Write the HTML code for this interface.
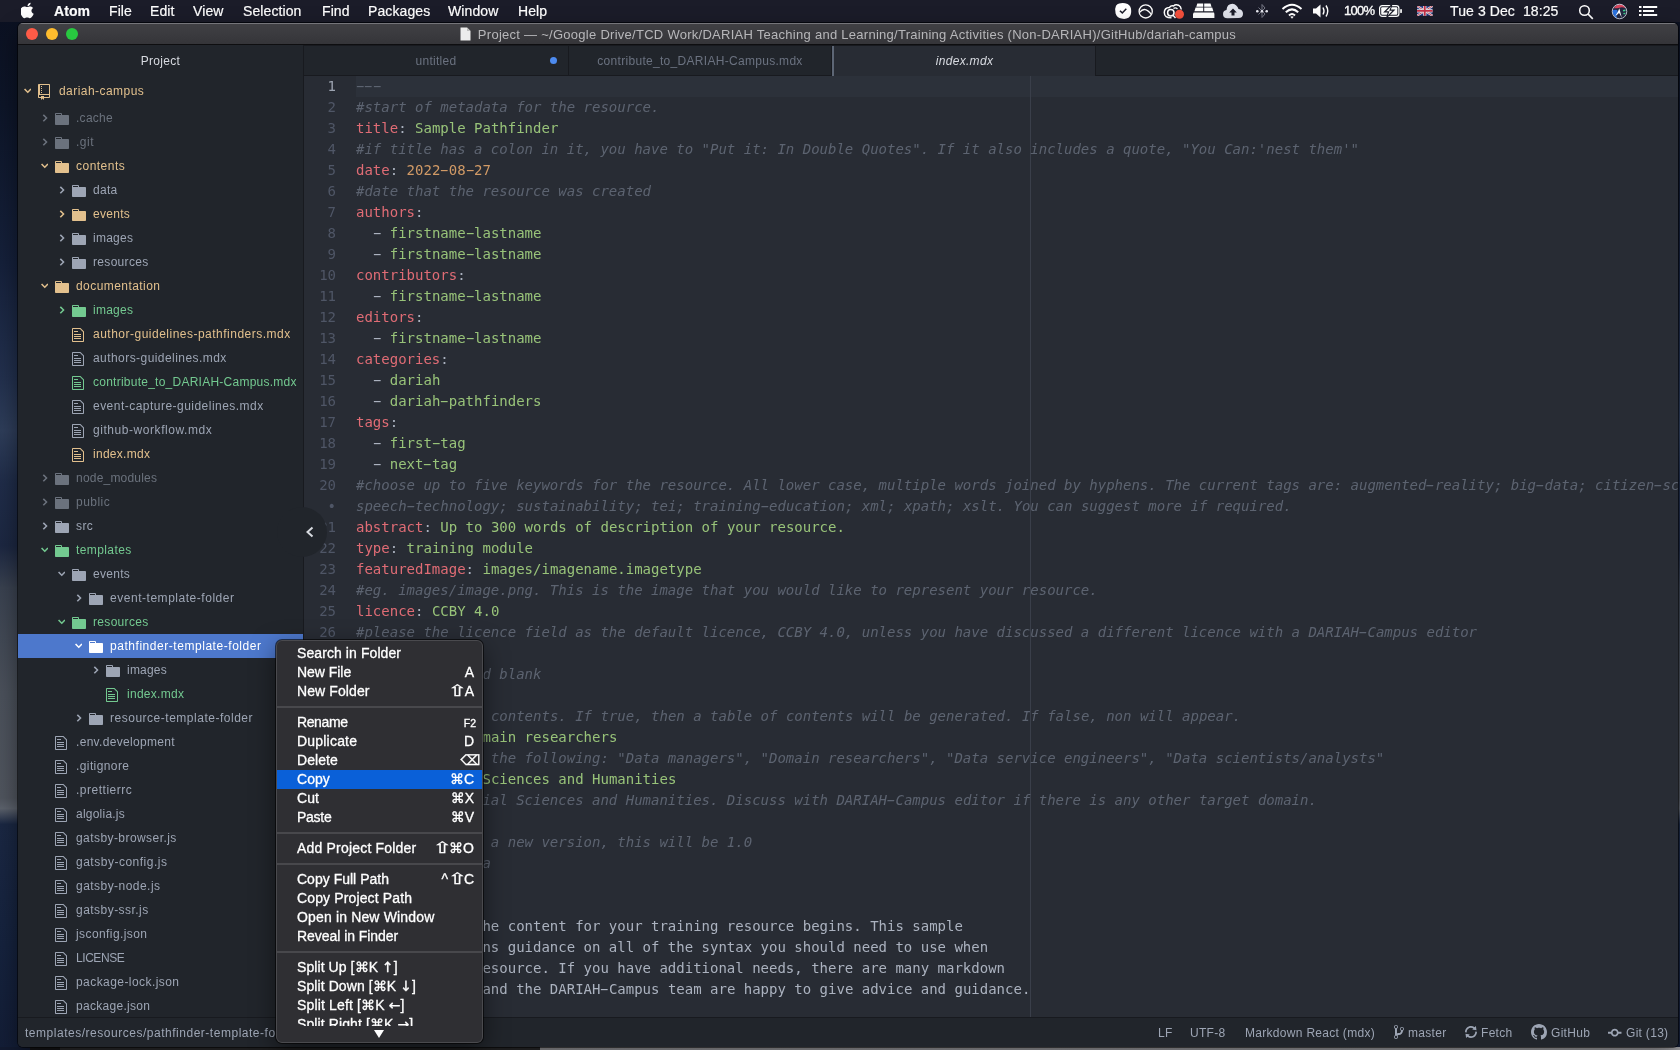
<!DOCTYPE html>
<html lang="en">
<head>
<meta charset="utf-8">
<title>Project — dariah-campus — Atom</title>
<style>
*{box-sizing:border-box;margin:0;padding:0}
html,body{width:1680px;height:1050px;overflow:hidden}
body{position:relative;background:#141a2b;font-family:"Liberation Sans",sans-serif;font-size:12px;color:#9da5b4;-webkit-font-smoothing:antialiased}
#desk{position:absolute;left:0;top:0;width:1680px;height:1050px;background:linear-gradient(180deg,#0b1020 0,#0d1528 10%,#15203a 25%,#22304d 36%,#2e3d59 41%,#1f2c48 46%,#1c2741 52%,#39414f 56%,#4a505a 66%,#4f545d 76%,#5b616b 77%,#1a2742 78.5%,#15223d 90%,#131d36 100%)}
#deskb{position:absolute;left:0;top:1047px;width:1680px;height:3px;background:linear-gradient(90deg,#121a30 0,#121a30 30px,#141416 30px,#141416 60px,#2a2a2c 60px,#2a2a2c 540px,#98989c 540px,#a4a4a8 100%)}
/* ---------- mac menu bar ---------- */
#mb{will-change:transform;position:absolute;left:0;top:0;width:1680px;height:22px;background:#1b1c29;color:#fff;font-size:14px;line-height:22px;white-space:nowrap}
#mb .it{position:absolute;top:0;height:22px;letter-spacing:0.1px;-webkit-text-stroke:0.2px #fff}
#mb .b{font-weight:bold}
#mb svg{position:absolute}
/* ---------- window ---------- */
#win{will-change:transform;position:absolute;left:18px;top:23px;width:1660px;height:1024px;border-radius:5px;overflow:hidden;background:#282c34;box-shadow:0 0 0 1px rgba(0,0,0,.55),0 8px 22px rgba(0,0,0,.45)}
#tb{position:absolute;left:0;top:0;width:1660px;height:22px;background:linear-gradient(180deg,#404044 0%,#353539 100%);border-top:1px solid #75757a;border-bottom:1px solid #0e0e10}
#tb .dot{position:absolute;top:4px;width:12px;height:12px;border-radius:50%}
#tb .ttl{position:absolute;left:0;top:0;width:1660px;text-align:center;font-size:13px;line-height:22px;color:#b7b7ba;white-space:nowrap;letter-spacing:0.27px}
/* ---------- tree ---------- */
#tree{position:absolute;left:0;top:22px;width:286px;height:972px;background:#21252b;border-right:1px solid #181a1f;overflow:hidden}
#tree .hd{position:absolute;left:0;top:1px;width:285px;height:30px;line-height:30px;text-align:center;color:#d7dae0;font-size:12px;letter-spacing:0.3px}
.row{position:absolute;left:0;width:285px;height:24px;line-height:24px;white-space:nowrap}
.row.root{height:24px}
.row.sel{background:#4d78cc}
.row span{position:absolute}
.row .cv{top:0;height:24px}
.row .cv svg{position:absolute}
.row .ic svg{display:block}
.row .nm{top:0;font-size:12px;letter-spacing:0.5px}
/* ---------- tabs ---------- */
#tabs{position:absolute;left:286px;top:22px;width:1374px;height:31px;background:#21252b;border-bottom:1px solid #181a1f;border-top:1px solid #181a1f}
.tab{position:absolute;top:0;width:264px;height:30px;line-height:31px;text-align:center;border-right:1px solid #181a1f;color:#6b7280;font-size:12px;letter-spacing:0.3px}
.tab.act{background:#282c34;color:#d7dae0;font-style:italic;height:30px;border-left:2px solid #5d6675}
.tab .mod{position:absolute;right:11px;top:11px;width:7px;height:7px;border-radius:50%;background:#4d8bf0}
/* ---------- editor ---------- */
#ed{position:absolute;left:286px;top:53px;width:1374px;height:941px;background:#282c34;overflow:hidden;font-family:"DejaVu Sans Mono","Liberation Mono",monospace;font-size:14px;line-height:21px}
#curline{position:absolute;left:52px;top:0;width:1322px;height:21px;background:#2c313a}
#gut{position:absolute;left:0;top:0;width:32px;text-align:right;color:#4f5666}
#gut div{height:21px}
#gut .cur{color:#9da4b1}
#code{position:absolute;left:52px;top:0}
#code div{height:21px;white-space:pre}
#wrap{position:absolute;left:726px;top:0;width:1px;height:943px;background:#3a3f4a}
.hy{display:inline-block;transform:scaleX(1.9)}
.r{color:#e06c75}.g{color:#98c379}.o{color:#d19a66}.p{color:#abb2bf}.c{color:#5c6370;font-style:italic}
#collapse{position:absolute;left:259px;top:484px;width:50px;height:50px;border-radius:50%;background:#21252b}
/* ---------- status ---------- */
#sb{position:absolute;left:0;top:994px;width:1660px;height:30px;background:#21252b;border-top:1px solid #181a1f;color:#9da5b4;font-size:12px;line-height:30px;white-space:nowrap}
#sb span{position:absolute;top:0;letter-spacing:0.3px}
#sb svg{position:absolute}
/* ---------- context menu ---------- */
#cm{will-change:transform;position:absolute;left:276px;top:640px;width:207px;height:403px;border-radius:6px;background:#2f2f33;box-shadow:0 0 0 1px rgba(0,0,0,.6),0 8px 24px rgba(0,0,0,.5);overflow:hidden;color:#fff;font-size:14px}
#cm .in{position:absolute;left:0;top:0;width:207px;height:403px;border:1px solid #4a4a4e;border-radius:6px}
#cm .list{position:absolute;left:0;top:4px;width:207px;height:382px;overflow:hidden}
.mi{position:relative;height:19px;line-height:19px;white-space:nowrap;-webkit-text-stroke:0.3px #fff}
.mi.hl{background:#0a60d8}
.mi .ml{position:absolute;left:21px;top:0;letter-spacing:0.1px}
.mi .mk{position:absolute;right:9px;top:0;font-family:"Liberation Sans","DejaVu Sans",sans-serif;font-size:14px}
.mi .mk.f2{font-size:10.5px;right:7px;top:0.5px}
.mi .mk.bs{right:3px;font-size:14px}
.mi .sh{display:inline-block;transform:scale(1.6,1.1);margin:0 1.5px 0 2.5px}
.mi .ar{font-family:"DejaVu Sans",sans-serif;font-size:14px;line-height:1}
.sep{height:12px;position:relative}
.sep:after{content:"";position:absolute;left:0;top:5px;width:207px;height:2px;background:#48484c}
#cm .arr{position:absolute;left:98px;top:390px;width:0;height:0;border-left:5.5px solid transparent;border-right:5.5px solid transparent;border-top:8px solid #fff}
</style>
</head>
<body>
<div id="desk"></div>
<div id="deskb"></div>

<div id="mb">
 <span class="it b" style="left:54px">Atom</span>
 <span class="it" style="left:109px">File</span>
 <span class="it" style="left:150px">Edit</span>
 <span class="it" style="left:193px">View</span>
 <span class="it" style="left:243px">Selection</span>
 <span class="it" style="left:322px">Find</span>
 <span class="it" style="left:368px">Packages</span>
 <span class="it" style="left:448px">Window</span>
 <span class="it" style="left:518px">Help</span>
 <svg style="left:21px;top:2px" width="14" height="17" viewBox="0 0 15 18"><path d="M10.3 0.6 C10.4 1.6 10 2.5 9.4 3.2 C8.8 3.9 7.9 4.4 7 4.3 C6.9 3.4 7.3 2.5 7.9 1.8 C8.5 1.1 9.5 0.7 10.3 0.6 Z M13.6 12.6 C13.2 13.6 12.9 14.1 12.4 14.9 C11.6 16 10.6 17.3 9.4 17.3 C8.3 17.3 8 16.6 6.6 16.6 C5.1 16.6 4.8 17.3 3.7 17.3 C2.5 17.3 1.6 16.1 0.9 15 C-1 12 -1.2 8.500 0 6.700 C0.900 5.400 2.200 4.600 3.500 4.600 C4.800 4.600 5.600 5.300 6.700 5.300 C7.700 5.300 8.400 4.600 9.900 4.600 C11 4.600 12.200 5.200 13.100 6.300 C10.300 7.800 10.700 11.700 13.600 12.600 Z" fill="#fff"/></svg>
 <svg style="left:1114px;top:2px" width="18" height="18" viewBox="0 0 18 18"><path d="M5.200 1.400 Q9.500 0.200 13.600 2 Q17.300 4.200 17.200 9 Q17.300 13.600 14.500 15.800 Q11.500 17.500 7.500 16.600 Q3 15.800 1.600 11.500 Q0.300 7 2 3.800 Q3.200 1.900 5.200 1.400 Z" fill="#fff"/><path d="M5.900 8.700 L8.300 10.900 L12.300 6.800" fill="none" stroke="#1b1c29" stroke-width="1.500"/></svg>
 <svg style="left:1137px;top:2px" width="18" height="18" viewBox="0 0 18 18"><circle cx="8.700" cy="9.400" r="6.600" fill="none" stroke="#fff" stroke-width="1.300"/><path d="M2.600 10.300 Q8 3.800 14.300 12.500" fill="none" stroke="#fff" stroke-width="1.300"/></svg>
 <svg style="left:1162px;top:2px" width="24" height="18" viewBox="0 0 24 18"><path d="M9.500 15.800 Q2.300 16 2.300 10.500 Q2.300 5.600 7.500 5.400 Q9 3.300 11.500 4 Q13.500 2 16.500 3.200 Q19 4.500 19.300 7.500" fill="none" stroke="#fff" stroke-width="1.500"/><circle cx="8.800" cy="10.700" r="3.200" fill="none" stroke="#fff" stroke-width="1.500"/><path d="M10.800 13 L13.500 16" stroke="#fff" stroke-width="1.500"/><path d="M11.500 6.500 Q13.500 5 15.500 7" fill="none" stroke="#fff" stroke-width="1.300"/><circle cx="17.500" cy="12.300" r="4.500" fill="#f4503c"/></svg>
 <svg style="left:1192px;top:2px" width="23" height="18" viewBox="0 0 23 18"><path d="M5.300 1.600 H11.200 V4.700 H4.300 Z M12.200 1.600 H18.500 L19.500 4.700 H12.200 Z M3.600 5.600 H11.200 V9.200 H2.400 Z M12.200 5.600 H20.200 L21.400 9.200 H12.200 Z M1.800 10.500 H22 L22.400 12 V15.900 H1 V12 Z" fill="#fff"/></svg>
 <svg style="left:1222px;top:3px" width="22" height="16" viewBox="0 0 22 16"><path d="M5.500 15.300 Q1 15.300 1 11 Q1 7.500 4.500 7 Q5 0.800 10.500 0.800 Q15 1.500 16.500 6 Q21 6.500 21 10.800 Q21 15 16.500 15 Z" fill="#dfe1ea"/><path d="M11 5.500 L14.800 9.500 H12.500 V12.500 H9.500 V9.500 H7.200 Z" fill="#1b1c29"/></svg>
 <svg style="left:1255px;top:2px" width="14" height="18" viewBox="0 0 14 18"><path d="M3.500 5.500 L10 12 L7 15.500 V2.500 L10 6 L3.500 12.500" fill="none" stroke="#777886" stroke-width="1"/><circle cx="2.300" cy="9.200" r="1.300" fill="#e8e9f0"/><circle cx="7" cy="9.200" r="1.300" fill="#e8e9f0"/><circle cx="11.700" cy="9.200" r="1.300" fill="#e8e9f0"/></svg>
 <svg style="left:1281px;top:3px" width="22" height="16" viewBox="0 0 22 16"><path d="M1.500 6 Q11 -2.500 20.500 6" fill="none" stroke="#fff" stroke-width="2"/><path d="M4.800 9.300 Q11 3.500 17.200 9.300" fill="none" stroke="#fff" stroke-width="2"/><path d="M8 12.400 Q11 9.600 14 12.400" fill="none" stroke="#fff" stroke-width="2"/><path d="M11 15.700 L9.300 13.800 Q11 12.600 12.700 13.800 Z" fill="#fff"/></svg>
 <svg style="left:1312px;top:3px" width="20" height="16" viewBox="0 0 20 16"><path d="M1 5.500 H4 L8.500 1.500 V14.500 L4 10.500 H1 Z" fill="#fff"/><path d="M11 4.500 Q13 8 11 11.500" fill="none" stroke="#fff" stroke-width="1.400"/><path d="M14 2.500 Q17.500 8 14 13.500" fill="none" stroke="#fff" stroke-width="1.400"/></svg>
 <span class="it" style="left:1344px;font-size:13px;letter-spacing:-0.7px;-webkit-text-stroke:0.35px #fff">100%</span>
 <svg style="left:1379px;top:5px" width="24" height="12" viewBox="0 0 24 12"><rect x="0.600" y="0.600" width="19.300" height="10.800" rx="2.600" fill="none" stroke="#fff" stroke-width="1.200"/><rect x="2.200" y="2.200" width="16.100" height="7.600" rx="1" fill="#fff"/><rect x="21.200" y="3.900" width="1.700" height="4.200" rx="0.850" fill="#fff"/><path d="M12.600 0 L5.800 6.900 H9.600 L8 12 L14.800 5.100 H11 Z" fill="#1b1c29" stroke="#1b1c29" stroke-width="1.400"/><path d="M12 1.400 L7.200 6.300 H10.400 L8.800 10.600 L13.400 5.700 H10.200 Z" fill="#fff"/></svg>
 <svg style="left:1417.300px;top:6.200px;opacity:0.9" width="15.500" height="9.700" viewBox="0 0 17 11" preserveAspectRatio="none"><rect width="17" height="11" fill="#2b3f8c"/><path d="M0 0 L17 11 M17 0 L0 11" stroke="#fff" stroke-width="2.400"/><path d="M0 0 L17 11 M17 0 L0 11" stroke="#d8324a" stroke-width="0.900"/><path d="M8.500 0 V11 M0 5.500 H17" stroke="#fff" stroke-width="3.600"/><path d="M8.500 0 V11 M0 5.500 H17" stroke="#d8324a" stroke-width="2"/></svg>
 <span class="it" style="left:1450px">Tue 3 Dec&nbsp; 18:25</span>
 <svg style="left:1578px;top:4px" width="16" height="16" viewBox="0 0 16 16"><circle cx="6.500" cy="6.500" r="4.800" fill="none" stroke="#fff" stroke-width="1.500"/><path d="M10 10 L14.800 14.800" stroke="#fff" stroke-width="1.700"/></svg>
 <svg style="left:1610.500px;top:2.500px" width="17" height="17" viewBox="0 0 18 18"><circle cx="9" cy="9" r="8" fill="#232842"/><path d="M3 5.500 Q6 1.200 9.500 1.300 Q13.500 1.600 15.500 5.500 Q12 3.800 9 5 Q6 5.800 3 5.500 Z" fill="#d6455c"/><path d="M1.300 8 Q3.500 6.500 6.500 7.500 L7.500 10 Q5 13.500 6.500 16.300 Q2 14.500 1.300 8 Z" fill="#2a72e0"/><path d="M8.800 5.500 L11.500 16 Q9.800 12 8.500 10.500 Q6.500 12.500 4.500 13.500 Q7.500 10 8.800 5.500 Z" fill="#ffffff"/><path d="M12.500 7.500 L15 7 L15.500 8.500 L13 9 Z M13 10.500 L15.300 10.200 L15 12 L13.300 12 Z" fill="#3fcf8e"/><circle cx="9" cy="9" r="7.700" fill="none" stroke="#d8dbe6" stroke-width="0.900"/></svg>
 <svg style="left:1639px;top:5px" width="19" height="12" viewBox="0 0 19 12"><path d="M0 2 H2.500 M4 2 H18.200 M0 6 H2.500 M4 6 H15 M0 10 H2.500 M4 10 H18.200" stroke="#fff" stroke-width="2"/></svg>
</div>

<div id="win">
 <div id="tb">
  <div class="dot" style="left:8px;background:#fe5b47"></div>
  <div class="dot" style="left:28px;background:#febc2e"></div>
  <div class="dot" style="left:48px;background:#28c840"></div>
  <div class="ttl"><svg width="11" height="14" viewBox="0 0 11 14" style="vertical-align:-2px;margin-right:7px"><path d="M0.5 0.5 H7 L10.5 4 V13.5 H0.5 Z" fill="#ececec"/><path d="M7 0.5 V4 H10.5" fill="#bdbdbd"/></svg>Project — ~/Google Drive/TCD Work/DARIAH Teaching and Learning/Training Activities (Non-DARIAH)/GitHub/dariah-campus</div>
 </div>

 <div id="tree">
  <div class="hd">Project</div>
<div class="row root" style="top:34px"><span class="cv" style="left:5px;top:0.5px"><svg class="chev" width="7.5" height="12" viewBox="0 0 10 16" style="left:0.500px;top:5.500px"><path fill="#e2c08d" d="M5 11L0 6l1.500-1.500L5 8.250 8.500 4.500 10 6l-5 5z"/></svg></span><span class="ic" style="left:20px;top:5px"><svg class="ico" width="12" height="16" viewBox="0 0 12 16"><path fill="#e2c08d" fill-rule="evenodd" d="M4 9H3V8h1v1zm0-3H3v1h1V6zm0-2H3v1h1V4zm0-2H3v1h1V2zm8-1v12c0 .55-.45 1-1 1H6v2l-1.500-1.500L3 16v-2H1c-.55 0-1-.45-1-1V1c0-.55.450-1 1-1h10c.55 0 1 .45 1 1zm-1 10H1v2h2v-1h3v1h5v-2zm0-10H2v9h9V1z"/></svg></span><span class="nm" style="left:41px;color:#e2c08d;letter-spacing:0.448px">dariah-campus</span></div>
<div class="row" style="top:61px"><span class="cv" style="left:22px"><svg class="chev" width="6" height="12" viewBox="0 0 8 16" style="left:2px;top:6px"><path fill="#6b727d" d="M7.5 8l-5 5L1 11.5 4.750 8 1 4.500 2.500 3l5 5z"/></svg></span><span class="ic" style="left:37px;top:5px"><svg class="ico" width="14" height="16" viewBox="0 0 14 16"><path fill="#6b727d" fill-rule="evenodd" d="M13 4H7V3c0-.66-.31-1-1-1H1c-.55 0-1 .45-1 1v10c0 .55.450 1 1 1h12c.55 0 1-.45 1-1V5c0-.55-.45-1-1-1zM6 4H1V3h5v1z"/></svg></span><span class="nm" style="left:58px;color:#6b727d;letter-spacing:0.278px">.cache</span></div>
<div class="row" style="top:85px"><span class="cv" style="left:22px"><svg class="chev" width="6" height="12" viewBox="0 0 8 16" style="left:2px;top:6px"><path fill="#6b727d" d="M7.5 8l-5 5L1 11.5 4.750 8 1 4.500 2.500 3l5 5z"/></svg></span><span class="ic" style="left:37px;top:5px"><svg class="ico" width="14" height="16" viewBox="0 0 14 16"><path fill="#6b727d" fill-rule="evenodd" d="M13 4H7V3c0-.66-.31-1-1-1H1c-.55 0-1 .45-1 1v10c0 .55.450 1 1 1h12c.55 0 1-.45 1-1V5c0-.55-.45-1-1-1zM6 4H1V3h5v1z"/></svg></span><span class="nm" style="left:58px;color:#6b727d;letter-spacing:0.495px">.git</span></div>
<div class="row" style="top:109px"><span class="cv" style="left:22px"><svg class="chev" width="7.5" height="12" viewBox="0 0 10 16" style="left:0.500px;top:5.500px"><path fill="#e2c08d" d="M5 11L0 6l1.500-1.500L5 8.250 8.500 4.500 10 6l-5 5z"/></svg></span><span class="ic" style="left:37px;top:5px"><svg class="ico" width="14" height="16" viewBox="0 0 14 16"><path fill="#e2c08d" fill-rule="evenodd" d="M13 4H7V3c0-.66-.31-1-1-1H1c-.55 0-1 .45-1 1v10c0 .55.450 1 1 1h12c.55 0 1-.45 1-1V5c0-.55-.45-1-1-1zM6 4H1V3h5v1z"/></svg></span><span class="nm" style="left:58px;color:#e2c08d;letter-spacing:0.482px">contents</span></div>
<div class="row" style="top:133px"><span class="cv" style="left:39px"><svg class="chev" width="6" height="12" viewBox="0 0 8 16" style="left:2px;top:6px"><path fill="#9da5b4" d="M7.5 8l-5 5L1 11.5 4.750 8 1 4.500 2.500 3l5 5z"/></svg></span><span class="ic" style="left:54px;top:5px"><svg class="ico" width="14" height="16" viewBox="0 0 14 16"><path fill="#9da5b4" fill-rule="evenodd" d="M13 4H7V3c0-.66-.31-1-1-1H1c-.55 0-1 .45-1 1v10c0 .55.450 1 1 1h12c.55 0 1-.45 1-1V5c0-.55-.45-1-1-1zM6 4H1V3h5v1z"/></svg></span><span class="nm" style="left:75px;color:#9da5b4;letter-spacing:0.297px">data</span></div>
<div class="row" style="top:157px"><span class="cv" style="left:39px"><svg class="chev" width="6" height="12" viewBox="0 0 8 16" style="left:2px;top:6px"><path fill="#e2c08d" d="M7.5 8l-5 5L1 11.5 4.750 8 1 4.500 2.500 3l5 5z"/></svg></span><span class="ic" style="left:54px;top:5px"><svg class="ico" width="14" height="16" viewBox="0 0 14 16"><path fill="#e2c08d" fill-rule="evenodd" d="M13 4H7V3c0-.66-.31-1-1-1H1c-.55 0-1 .45-1 1v10c0 .55.450 1 1 1h12c.55 0 1-.45 1-1V5c0-.55-.45-1-1-1zM6 4H1V3h5v1z"/></svg></span><span class="nm" style="left:75px;color:#e2c08d;letter-spacing:0.278px">events</span></div>
<div class="row" style="top:181px"><span class="cv" style="left:39px"><svg class="chev" width="6" height="12" viewBox="0 0 8 16" style="left:2px;top:6px"><path fill="#9da5b4" d="M7.5 8l-5 5L1 11.5 4.750 8 1 4.500 2.500 3l5 5z"/></svg></span><span class="ic" style="left:54px;top:5px"><svg class="ico" width="14" height="16" viewBox="0 0 14 16"><path fill="#9da5b4" fill-rule="evenodd" d="M13 4H7V3c0-.66-.31-1-1-1H1c-.55 0-1 .45-1 1v10c0 .55.450 1 1 1h12c.55 0 1-.45 1-1V5c0-.55-.45-1-1-1zM6 4H1V3h5v1z"/></svg></span><span class="nm" style="left:75px;color:#9da5b4;letter-spacing:0.263px">images</span></div>
<div class="row" style="top:205px"><span class="cv" style="left:39px"><svg class="chev" width="6" height="12" viewBox="0 0 8 16" style="left:2px;top:6px"><path fill="#9da5b4" d="M7.5 8l-5 5L1 11.5 4.750 8 1 4.500 2.500 3l5 5z"/></svg></span><span class="ic" style="left:54px;top:5px"><svg class="ico" width="14" height="16" viewBox="0 0 14 16"><path fill="#9da5b4" fill-rule="evenodd" d="M13 4H7V3c0-.66-.31-1-1-1H1c-.55 0-1 .45-1 1v10c0 .55.450 1 1 1h12c.55 0 1-.45 1-1V5c0-.55-.45-1-1-1zM6 4H1V3h5v1z"/></svg></span><span class="nm" style="left:75px;color:#9da5b4;letter-spacing:0.32px">resources</span></div>
<div class="row" style="top:229px"><span class="cv" style="left:22px"><svg class="chev" width="7.5" height="12" viewBox="0 0 10 16" style="left:0.500px;top:5.500px"><path fill="#e2c08d" d="M5 11L0 6l1.500-1.500L5 8.250 8.500 4.500 10 6l-5 5z"/></svg></span><span class="ic" style="left:37px;top:5px"><svg class="ico" width="14" height="16" viewBox="0 0 14 16"><path fill="#e2c08d" fill-rule="evenodd" d="M13 4H7V3c0-.66-.31-1-1-1H1c-.55 0-1 .45-1 1v10c0 .55.450 1 1 1h12c.55 0 1-.45 1-1V5c0-.55-.45-1-1-1zM6 4H1V3h5v1z"/></svg></span><span class="nm" style="left:58px;color:#e2c08d;letter-spacing:0.439px">documentation</span></div>
<div class="row" style="top:253px"><span class="cv" style="left:39px"><svg class="chev" width="6" height="12" viewBox="0 0 8 16" style="left:2px;top:6px"><path fill="#73c990" d="M7.5 8l-5 5L1 11.5 4.750 8 1 4.500 2.500 3l5 5z"/></svg></span><span class="ic" style="left:54px;top:5px"><svg class="ico" width="14" height="16" viewBox="0 0 14 16"><path fill="#73c990" fill-rule="evenodd" d="M13 4H7V3c0-.66-.31-1-1-1H1c-.55 0-1 .45-1 1v10c0 .55.450 1 1 1h12c.55 0 1-.45 1-1V5c0-.55-.45-1-1-1zM6 4H1V3h5v1z"/></svg></span><span class="nm" style="left:75px;color:#73c990;letter-spacing:0.263px">images</span></div>
<div class="row" style="top:277px"><span class="ic" style="left:54px;top:5px"><svg class="ico" width="12" height="16" viewBox="0 0 12 16"><path fill="#e2c08d" fill-rule="evenodd" d="M6 5H2V4h4v1zM2 8h7V7H2v1zm0 2h7V9H2v1zm0 2h7v-1H2v1zm10-7.500V14c0 .55-.45 1-1 1H1c-.55 0-1-.45-1-1V2c0-.55.450-1 1-1h7.500L12 4.500zM11 5L8 2H1v12h10V5z"/></svg></span><span class="nm" style="left:75px;color:#e2c08d;letter-spacing:0.494px">author-guidelines-pathfinders.mdx</span></div>
<div class="row" style="top:301px"><span class="ic" style="left:54px;top:5px"><svg class="ico" width="12" height="16" viewBox="0 0 12 16"><path fill="#9da5b4" fill-rule="evenodd" d="M6 5H2V4h4v1zM2 8h7V7H2v1zm0 2h7V9H2v1zm0 2h7v-1H2v1zm10-7.500V14c0 .55-.45 1-1 1H1c-.55 0-1-.45-1-1V2c0-.55.450-1 1-1h7.500L12 4.500zM11 5L8 2H1v12h10V5z"/></svg></span><span class="nm" style="left:75px;color:#9da5b4;letter-spacing:0.437px">authors-guidelines.mdx</span></div>
<div class="row" style="top:325px"><span class="ic" style="left:54px;top:5px"><svg class="ico" width="12" height="16" viewBox="0 0 12 16"><path fill="#73c990" fill-rule="evenodd" d="M6 5H2V4h4v1zM2 8h7V7H2v1zm0 2h7V9H2v1zm0 2h7v-1H2v1zm10-7.500V14c0 .55-.45 1-1 1H1c-.55 0-1-.45-1-1V2c0-.55.450-1 1-1h7.500L12 4.500zM11 5L8 2H1v12h10V5z"/></svg></span><span class="nm" style="left:75px;color:#73c990;letter-spacing:0.247px">contribute_to_DARIAH-Campus.mdx</span></div>
<div class="row" style="top:349px"><span class="ic" style="left:54px;top:5px"><svg class="ico" width="12" height="16" viewBox="0 0 12 16"><path fill="#9da5b4" fill-rule="evenodd" d="M6 5H2V4h4v1zM2 8h7V7H2v1zm0 2h7V9H2v1zm0 2h7v-1H2v1zm10-7.500V14c0 .55-.45 1-1 1H1c-.55 0-1-.45-1-1V2c0-.55.450-1 1-1h7.500L12 4.500zM11 5L8 2H1v12h10V5z"/></svg></span><span class="nm" style="left:75px;color:#9da5b4;letter-spacing:0.475px">event-capture-guidelines.mdx</span></div>
<div class="row" style="top:373px"><span class="ic" style="left:54px;top:5px"><svg class="ico" width="12" height="16" viewBox="0 0 12 16"><path fill="#9da5b4" fill-rule="evenodd" d="M6 5H2V4h4v1zM2 8h7V7H2v1zm0 2h7V9H2v1zm0 2h7v-1H2v1zm10-7.500V14c0 .55-.45 1-1 1H1c-.55 0-1-.45-1-1V2c0-.55.450-1 1-1h7.500L12 4.500zM11 5L8 2H1v12h10V5z"/></svg></span><span class="nm" style="left:75px;color:#9da5b4;letter-spacing:0.557px">github-workflow.mdx</span></div>
<div class="row" style="top:397px"><span class="ic" style="left:54px;top:5px"><svg class="ico" width="12" height="16" viewBox="0 0 12 16"><path fill="#e2c08d" fill-rule="evenodd" d="M6 5H2V4h4v1zM2 8h7V7H2v1zm0 2h7V9H2v1zm0 2h7v-1H2v1zm10-7.500V14c0 .55-.45 1-1 1H1c-.55 0-1-.45-1-1V2c0-.55.450-1 1-1h7.500L12 4.500zM11 5L8 2H1v12h10V5z"/></svg></span><span class="nm" style="left:75px;color:#e2c08d;letter-spacing:0.287px">index.mdx</span></div>
<div class="row" style="top:421px"><span class="cv" style="left:22px"><svg class="chev" width="6" height="12" viewBox="0 0 8 16" style="left:2px;top:6px"><path fill="#6b727d" d="M7.5 8l-5 5L1 11.5 4.750 8 1 4.500 2.500 3l5 5z"/></svg></span><span class="ic" style="left:37px;top:5px"><svg class="ico" width="14" height="16" viewBox="0 0 14 16"><path fill="#6b727d" fill-rule="evenodd" d="M13 4H7V3c0-.66-.31-1-1-1H1c-.55 0-1 .45-1 1v10c0 .55.450 1 1 1h12c.55 0 1-.45 1-1V5c0-.55-.45-1-1-1zM6 4H1V3h5v1z"/></svg></span><span class="nm" style="left:58px;color:#6b727d;letter-spacing:0.206px">node_modules</span></div>
<div class="row" style="top:445px"><span class="cv" style="left:22px"><svg class="chev" width="6" height="12" viewBox="0 0 8 16" style="left:2px;top:6px"><path fill="#6b727d" d="M7.5 8l-5 5L1 11.5 4.750 8 1 4.500 2.500 3l5 5z"/></svg></span><span class="ic" style="left:37px;top:5px"><svg class="ico" width="14" height="16" viewBox="0 0 14 16"><path fill="#6b727d" fill-rule="evenodd" d="M13 4H7V3c0-.66-.31-1-1-1H1c-.55 0-1 .45-1 1v10c0 .55.450 1 1 1h12c.55 0 1-.45 1-1V5c0-.55-.45-1-1-1zM6 4H1V3h5v1z"/></svg></span><span class="nm" style="left:58px;color:#6b727d;letter-spacing:0.478px">public</span></div>
<div class="row" style="top:469px"><span class="cv" style="left:22px"><svg class="chev" width="6" height="12" viewBox="0 0 8 16" style="left:2px;top:6px"><path fill="#9da5b4" d="M7.5 8l-5 5L1 11.5 4.750 8 1 4.500 2.500 3l5 5z"/></svg></span><span class="ic" style="left:37px;top:5px"><svg class="ico" width="14" height="16" viewBox="0 0 14 16"><path fill="#9da5b4" fill-rule="evenodd" d="M13 4H7V3c0-.66-.31-1-1-1H1c-.55 0-1 .45-1 1v10c0 .55.450 1 1 1h12c.55 0 1-.45 1-1V5c0-.55-.45-1-1-1zM6 4H1V3h5v1z"/></svg></span><span class="nm" style="left:58px;color:#9da5b4;letter-spacing:0.375px">src</span></div>
<div class="row" style="top:493px"><span class="cv" style="left:22px"><svg class="chev" width="7.5" height="12" viewBox="0 0 10 16" style="left:0.500px;top:5.500px"><path fill="#73c990" d="M5 11L0 6l1.500-1.500L5 8.250 8.500 4.500 10 6l-5 5z"/></svg></span><span class="ic" style="left:37px;top:5px"><svg class="ico" width="14" height="16" viewBox="0 0 14 16"><path fill="#73c990" fill-rule="evenodd" d="M13 4H7V3c0-.66-.31-1-1-1H1c-.55 0-1 .45-1 1v10c0 .55.450 1 1 1h12c.55 0 1-.45 1-1V5c0-.55-.45-1-1-1zM6 4H1V3h5v1z"/></svg></span><span class="nm" style="left:58px;color:#73c990;letter-spacing:0.402px">templates</span></div>
<div class="row" style="top:517px"><span class="cv" style="left:39px"><svg class="chev" width="7.5" height="12" viewBox="0 0 10 16" style="left:0.500px;top:5.500px"><path fill="#9da5b4" d="M5 11L0 6l1.500-1.500L5 8.250 8.500 4.500 10 6l-5 5z"/></svg></span><span class="ic" style="left:54px;top:5px"><svg class="ico" width="14" height="16" viewBox="0 0 14 16"><path fill="#9da5b4" fill-rule="evenodd" d="M13 4H7V3c0-.66-.31-1-1-1H1c-.55 0-1 .45-1 1v10c0 .55.450 1 1 1h12c.55 0 1-.45 1-1V5c0-.55-.45-1-1-1zM6 4H1V3h5v1z"/></svg></span><span class="nm" style="left:75px;color:#9da5b4;letter-spacing:0.278px">events</span></div>
<div class="row" style="top:541px"><span class="cv" style="left:56px"><svg class="chev" width="6" height="12" viewBox="0 0 8 16" style="left:2px;top:6px"><path fill="#9da5b4" d="M7.5 8l-5 5L1 11.5 4.750 8 1 4.500 2.500 3l5 5z"/></svg></span><span class="ic" style="left:71px;top:5px"><svg class="ico" width="14" height="16" viewBox="0 0 14 16"><path fill="#9da5b4" fill-rule="evenodd" d="M13 4H7V3c0-.66-.31-1-1-1H1c-.55 0-1 .45-1 1v10c0 .55.450 1 1 1h12c.55 0 1-.45 1-1V5c0-.55-.45-1-1-1zM6 4H1V3h5v1z"/></svg></span><span class="nm" style="left:92px;color:#9da5b4;letter-spacing:0.53px">event-template-folder</span></div>
<div class="row" style="top:565px"><span class="cv" style="left:39px"><svg class="chev" width="7.5" height="12" viewBox="0 0 10 16" style="left:0.500px;top:5.500px"><path fill="#73c990" d="M5 11L0 6l1.500-1.500L5 8.250 8.500 4.500 10 6l-5 5z"/></svg></span><span class="ic" style="left:54px;top:5px"><svg class="ico" width="14" height="16" viewBox="0 0 14 16"><path fill="#73c990" fill-rule="evenodd" d="M13 4H7V3c0-.66-.31-1-1-1H1c-.55 0-1 .45-1 1v10c0 .55.450 1 1 1h12c.55 0 1-.45 1-1V5c0-.55-.45-1-1-1zM6 4H1V3h5v1z"/></svg></span><span class="nm" style="left:75px;color:#73c990;letter-spacing:0.32px">resources</span></div>
<div class="row sel" style="top:589px"><span class="cv" style="left:56px"><svg class="chev" width="7.5" height="12" viewBox="0 0 10 16" style="left:0.500px;top:5.500px"><path fill="#ffffff" d="M5 11L0 6l1.500-1.500L5 8.250 8.500 4.500 10 6l-5 5z"/></svg></span><span class="ic" style="left:71px;top:5px"><svg class="ico" width="14" height="16" viewBox="0 0 14 16"><path fill="#ffffff" fill-rule="evenodd" d="M13 4H7V3c0-.66-.31-1-1-1H1c-.55 0-1 .45-1 1v10c0 .55.450 1 1 1h12c.55 0 1-.45 1-1V5c0-.55-.45-1-1-1zM6 4H1V3h5v1z"/></svg></span><span class="nm" style="left:92px;color:#ffffff;letter-spacing:0.543px">pathfinder-template-folder</span></div>
<div class="row" style="top:613px"><span class="cv" style="left:73px"><svg class="chev" width="6" height="12" viewBox="0 0 8 16" style="left:2px;top:6px"><path fill="#9da5b4" d="M7.5 8l-5 5L1 11.5 4.750 8 1 4.500 2.500 3l5 5z"/></svg></span><span class="ic" style="left:88px;top:5px"><svg class="ico" width="14" height="16" viewBox="0 0 14 16"><path fill="#9da5b4" fill-rule="evenodd" d="M13 4H7V3c0-.66-.31-1-1-1H1c-.55 0-1 .45-1 1v10c0 .55.450 1 1 1h12c.55 0 1-.45 1-1V5c0-.55-.45-1-1-1zM6 4H1V3h5v1z"/></svg></span><span class="nm" style="left:109px;color:#9da5b4;letter-spacing:0.212px">images</span></div>
<div class="row" style="top:637px"><span class="ic" style="left:88px;top:5px"><svg class="ico" width="12" height="16" viewBox="0 0 12 16"><path fill="#73c990" fill-rule="evenodd" d="M6 5H2V4h4v1zM2 8h7V7H2v1zm0 2h7V9H2v1zm0 2h7v-1H2v1zm10-7.500V14c0 .55-.45 1-1 1H1c-.55 0-1-.45-1-1V2c0-.55.450-1 1-1h7.500L12 4.500zM11 5L8 2H1v12h10V5z"/></svg></span><span class="nm" style="left:109px;color:#73c990;letter-spacing:0.287px">index.mdx</span></div>
<div class="row" style="top:661px"><span class="cv" style="left:56px"><svg class="chev" width="6" height="12" viewBox="0 0 8 16" style="left:2px;top:6px"><path fill="#9da5b4" d="M7.5 8l-5 5L1 11.5 4.750 8 1 4.500 2.500 3l5 5z"/></svg></span><span class="ic" style="left:71px;top:5px"><svg class="ico" width="14" height="16" viewBox="0 0 14 16"><path fill="#9da5b4" fill-rule="evenodd" d="M13 4H7V3c0-.66-.31-1-1-1H1c-.55 0-1 .45-1 1v10c0 .55.450 1 1 1h12c.55 0 1-.45 1-1V5c0-.55-.45-1-1-1zM6 4H1V3h5v1z"/></svg></span><span class="nm" style="left:92px;color:#9da5b4;letter-spacing:0.512px">resource-template-folder</span></div>
<div class="row" style="top:685px"><span class="ic" style="left:37px;top:5px"><svg class="ico" width="12" height="16" viewBox="0 0 12 16"><path fill="#9da5b4" fill-rule="evenodd" d="M6 5H2V4h4v1zM2 8h7V7H2v1zm0 2h7V9H2v1zm0 2h7v-1H2v1zm10-7.500V14c0 .55-.45 1-1 1H1c-.55 0-1-.45-1-1V2c0-.55.450-1 1-1h7.500L12 4.500zM11 5L8 2H1v12h10V5z"/></svg></span><span class="nm" style="left:58px;color:#9da5b4;letter-spacing:0.31px">.env.development</span></div>
<div class="row" style="top:709px"><span class="ic" style="left:37px;top:5px"><svg class="ico" width="12" height="16" viewBox="0 0 12 16"><path fill="#9da5b4" fill-rule="evenodd" d="M6 5H2V4h4v1zM2 8h7V7H2v1zm0 2h7V9H2v1zm0 2h7v-1H2v1zm10-7.500V14c0 .55-.45 1-1 1H1c-.55 0-1-.45-1-1V2c0-.55.450-1 1-1h7.500L12 4.500zM11 5L8 2H1v12h10V5z"/></svg></span><span class="nm" style="left:58px;color:#9da5b4;letter-spacing:0.403px">.gitignore</span></div>
<div class="row" style="top:733px"><span class="ic" style="left:37px;top:5px"><svg class="ico" width="12" height="16" viewBox="0 0 12 16"><path fill="#9da5b4" fill-rule="evenodd" d="M6 5H2V4h4v1zM2 8h7V7H2v1zm0 2h7V9H2v1zm0 2h7v-1H2v1zm10-7.500V14c0 .55-.45 1-1 1H1c-.55 0-1-.45-1-1V2c0-.55.450-1 1-1h7.500L12 4.500zM11 5L8 2H1v12h10V5z"/></svg></span><span class="nm" style="left:58px;color:#9da5b4;letter-spacing:0.506px">.prettierrc</span></div>
<div class="row" style="top:757px"><span class="ic" style="left:37px;top:5px"><svg class="ico" width="12" height="16" viewBox="0 0 12 16"><path fill="#9da5b4" fill-rule="evenodd" d="M6 5H2V4h4v1zM2 8h7V7H2v1zm0 2h7V9H2v1zm0 2h7v-1H2v1zm10-7.500V14c0 .55-.45 1-1 1H1c-.55 0-1-.45-1-1V2c0-.55.450-1 1-1h7.500L12 4.500zM11 5L8 2H1v12h10V5z"/></svg></span><span class="nm" style="left:58px;color:#9da5b4;letter-spacing:0.227px">algolia.js</span></div>
<div class="row" style="top:781px"><span class="ic" style="left:37px;top:5px"><svg class="ico" width="12" height="16" viewBox="0 0 12 16"><path fill="#9da5b4" fill-rule="evenodd" d="M6 5H2V4h4v1zM2 8h7V7H2v1zm0 2h7V9H2v1zm0 2h7v-1H2v1zm10-7.500V14c0 .55-.45 1-1 1H1c-.55 0-1-.45-1-1V2c0-.55.450-1 1-1h7.500L12 4.500zM11 5L8 2H1v12h10V5z"/></svg></span><span class="nm" style="left:58px;color:#9da5b4;letter-spacing:0.43px">gatsby-browser.js</span></div>
<div class="row" style="top:805px"><span class="ic" style="left:37px;top:5px"><svg class="ico" width="12" height="16" viewBox="0 0 12 16"><path fill="#9da5b4" fill-rule="evenodd" d="M6 5H2V4h4v1zM2 8h7V7H2v1zm0 2h7V9H2v1zm0 2h7v-1H2v1zm10-7.500V14c0 .55-.45 1-1 1H1c-.55 0-1-.45-1-1V2c0-.55.450-1 1-1h7.500L12 4.500zM11 5L8 2H1v12h10V5z"/></svg></span><span class="nm" style="left:58px;color:#9da5b4;letter-spacing:0.508px">gatsby-config.js</span></div>
<div class="row" style="top:829px"><span class="ic" style="left:37px;top:5px"><svg class="ico" width="12" height="16" viewBox="0 0 12 16"><path fill="#9da5b4" fill-rule="evenodd" d="M6 5H2V4h4v1zM2 8h7V7H2v1zm0 2h7V9H2v1zm0 2h7v-1H2v1zm10-7.500V14c0 .55-.45 1-1 1H1c-.55 0-1-.45-1-1V2c0-.55.450-1 1-1h7.500L12 4.500zM11 5L8 2H1v12h10V5z"/></svg></span><span class="nm" style="left:58px;color:#9da5b4;letter-spacing:0.458px">gatsby-node.js</span></div>
<div class="row" style="top:853px"><span class="ic" style="left:37px;top:5px"><svg class="ico" width="12" height="16" viewBox="0 0 12 16"><path fill="#9da5b4" fill-rule="evenodd" d="M6 5H2V4h4v1zM2 8h7V7H2v1zm0 2h7V9H2v1zm0 2h7v-1H2v1zm10-7.500V14c0 .55-.45 1-1 1H1c-.55 0-1-.45-1-1V2c0-.55.450-1 1-1h7.500L12 4.500zM11 5L8 2H1v12h10V5z"/></svg></span><span class="nm" style="left:58px;color:#9da5b4;letter-spacing:0.464px">gatsby-ssr.js</span></div>
<div class="row" style="top:877px"><span class="ic" style="left:37px;top:5px"><svg class="ico" width="12" height="16" viewBox="0 0 12 16"><path fill="#9da5b4" fill-rule="evenodd" d="M6 5H2V4h4v1zM2 8h7V7H2v1zm0 2h7V9H2v1zm0 2h7v-1H2v1zm10-7.500V14c0 .55-.45 1-1 1H1c-.55 0-1-.45-1-1V2c0-.55.450-1 1-1h7.500L12 4.500zM11 5L8 2H1v12h10V5z"/></svg></span><span class="nm" style="left:58px;color:#9da5b4;letter-spacing:0.413px">jsconfig.json</span></div>
<div class="row" style="top:901px"><span class="ic" style="left:37px;top:5px"><svg class="ico" width="12" height="16" viewBox="0 0 12 16"><path fill="#9da5b4" fill-rule="evenodd" d="M6 5H2V4h4v1zM2 8h7V7H2v1zm0 2h7V9H2v1zm0 2h7v-1H2v1zm10-7.500V14c0 .55-.45 1-1 1H1c-.55 0-1-.45-1-1V2c0-.55.450-1 1-1h7.500L12 4.500zM11 5L8 2H1v12h10V5z"/></svg></span><span class="nm" style="left:58px;color:#9da5b4;letter-spacing:-0.435px">LICENSE</span></div>
<div class="row" style="top:925px"><span class="ic" style="left:37px;top:5px"><svg class="ico" width="12" height="16" viewBox="0 0 12 16"><path fill="#9da5b4" fill-rule="evenodd" d="M6 5H2V4h4v1zM2 8h7V7H2v1zm0 2h7V9H2v1zm0 2h7v-1H2v1zm10-7.500V14c0 .55-.45 1-1 1H1c-.55 0-1-.45-1-1V2c0-.55.450-1 1-1h7.500L12 4.500zM11 5L8 2H1v12h10V5z"/></svg></span><span class="nm" style="left:58px;color:#9da5b4;letter-spacing:0.434px">package-lock.json</span></div>
<div class="row" style="top:949px"><span class="ic" style="left:37px;top:5px"><svg class="ico" width="12" height="16" viewBox="0 0 12 16"><path fill="#9da5b4" fill-rule="evenodd" d="M6 5H2V4h4v1zM2 8h7V7H2v1zm0 2h7V9H2v1zm0 2h7v-1H2v1zm10-7.500V14c0 .55-.45 1-1 1H1c-.55 0-1-.45-1-1V2c0-.55.450-1 1-1h7.500L12 4.500zM11 5L8 2H1v12h10V5z"/></svg></span><span class="nm" style="left:58px;color:#9da5b4;letter-spacing:0.298px">package.json</span></div>
 </div>

 <div id="tabs">
  <div class="tab" style="left:0;width:265px">untitled<span class="mod"></span></div>
  <div class="tab" style="left:265px;width:263px">contribute_to_DARIAH-Campus.mdx</div>
  <div class="tab act" style="left:528px">index.mdx</div>
 </div>

 <div id="ed">
  <div id="curline"></div>
  <div id="wrap"></div>
  <div id="gut">
<div class="cur">1</div>
<div>2</div>
<div>3</div>
<div>4</div>
<div>5</div>
<div>6</div>
<div>7</div>
<div>8</div>
<div>9</div>
<div>10</div>
<div>11</div>
<div>12</div>
<div>13</div>
<div>14</div>
<div>15</div>
<div>16</div>
<div>17</div>
<div>18</div>
<div>19</div>
<div>20</div>
<div>•</div>
<div>21</div>
<div>22</div>
<div>23</div>
<div>24</div>
<div>25</div>
<div>26</div>
<div>27</div>
<div>28</div>
<div>29</div>
<div>30</div>
<div>31</div>
<div>32</div>
<div>33</div>
<div>34</div>
<div>35</div>
<div>36</div>
<div>37</div>
<div>38</div>
<div>39</div>
<div>40</div>
<div>41</div>
<div>42</div>
<div>43</div>
<div>44</div>
  </div>
  <div id="code">
<div class="cur"><span class="c" style="font-style:normal"><span class="hy">-</span><span class="hy">-</span><span class="hy">-</span></span></div>
<div><span class="c">#start of metadata for the resource.</span></div>
<div><span class="r">title</span><span class="p">:</span> <span class="g">Sample Pathfinder</span></div>
<div><span class="c">#if title has a colon in it, you have to &quot;Put it: In Double Quotes&quot;. If it also includes a quote, &quot;You Can:&#x27;nest them&#x27;&quot;</span></div>
<div><span class="r">date</span><span class="p">:</span> <span class="o">2022<span class="hy">-</span>08<span class="hy">-</span>27</span></div>
<div><span class="c">#date that the resource was created</span></div>
<div><span class="r">authors</span><span class="p">:</span></div>
<div>  <span class="p"><span class="hy">-</span></span> <span class="g">firstname<span class="hy">-</span>lastname</span></div>
<div>  <span class="p"><span class="hy">-</span></span> <span class="g">firstname<span class="hy">-</span>lastname</span></div>
<div><span class="r">contributors</span><span class="p">:</span></div>
<div>  <span class="p"><span class="hy">-</span></span> <span class="g">firstname<span class="hy">-</span>lastname</span></div>
<div><span class="r">editors</span><span class="p">:</span></div>
<div>  <span class="p"><span class="hy">-</span></span> <span class="g">firstname<span class="hy">-</span>lastname</span></div>
<div><span class="r">categories</span><span class="p">:</span></div>
<div>  <span class="p"><span class="hy">-</span></span> <span class="g">dariah</span></div>
<div>  <span class="p"><span class="hy">-</span></span> <span class="g">dariah<span class="hy">-</span>pathfinders</span></div>
<div><span class="r">tags</span><span class="p">:</span></div>
<div>  <span class="p"><span class="hy">-</span></span> <span class="g">first<span class="hy">-</span>tag</span></div>
<div>  <span class="p"><span class="hy">-</span></span> <span class="g">next<span class="hy">-</span>tag</span></div>
<div><span class="c">#choose up to five keywords for the resource. All lower case, multiple words joined by hyphens. The current tags are: augmented<span class="hy">-</span>reality; big<span class="hy">-</span>data; citizen<span class="hy">-</span>science; data<span class="hy">-</span>management; digital<span class="hy">-</span>humanities;</span></div>
<div><span class="c">speech<span class="hy">-</span>technology; sustainability; tei; training<span class="hy">-</span>education; xml; xpath; xslt. You can suggest more if required.</span></div>
<div><span class="r">abstract</span><span class="p">:</span> <span class="g">Up to 300 words of description of your resource.</span></div>
<div><span class="r">type</span><span class="p">:</span> <span class="g">training module</span></div>
<div><span class="r">featuredImage</span><span class="p">:</span> <span class="g">images/imagename.imagetype</span></div>
<div><span class="c">#eg. images/image.png. This is the image that you would like to represent your resource.</span></div>
<div><span class="r">licence</span><span class="p">:</span> <span class="g">CCBY 4.0</span></div>
<div><span class="c">#please the licence field as the default licence, CCBY 4.0, unless you have discussed a different licence with a DARIAH<span class="hy">-</span>Campus editor</span></div>
<div><span class="r">remote</span><span class="p">:</span></div>
<div><span class="c">#leave the field blank</span></div>
<div><span class="r">toc</span><span class="p">:</span> <span class="o">false</span></div>
<div><span class="c">#toc <span class="hy">-</span> table of contents. If true, then a table of contents will be generated. If false, non will appear.</span></div>
<div><span class="r">targetGroup</span><span class="p">:</span> <span class="g">Domain researchers</span></div>
<div><span class="c">#must be one of the following: &quot;Data managers&quot;, &quot;Domain researchers&quot;, &quot;Data service engineers&quot;, &quot;Data scientists/analysts&quot;</span></div>
<div><span class="r">domain</span><span class="p">:</span> <span class="g">Social Sciences and Humanities</span></div>
<div><span class="c">#default is Social Sciences and Humanities. Discuss with DARIAH<span class="hy">-</span>Campus editor if there is any other target domain.</span></div>
<div><span class="r">version</span><span class="p">:</span> <span class="o">1.0</span></div>
<div><span class="c">#unless this is a new version, this will be 1.0</span></div>
<div><span class="c">#end of metadata</span></div>
<div><span class="c" style="font-style:normal"><span class="hy">-</span><span class="hy">-</span><span class="hy">-</span></span></div>
<div>&nbsp;</div>
<div><span class="p">This is where the content for your training resource begins. This sample</span></div>
<div><span class="p">document contains guidance on all of the syntax you should need to use when</span></div>
<div><span class="p">creating your resource. If you have additional needs, there are many markdown</span></div>
<div><span class="p">guides online, and the DARIAH<span class="hy">-</span>Campus team are happy to give advice and guidance.</span></div>
<div>&nbsp;</div>
  </div>
 </div>
 <div id="collapse"><svg width="10" height="12" viewBox="0 0 10 12" style="position:absolute;left:28px;top:19px"><path d="M7.5 1.5 L2.5 6 L7.5 10.5" fill="none" stroke="#d7dae0" stroke-width="2"/></svg></div>

 <div id="sb">
  <span style="left:7px;letter-spacing:0.52px">templates/resources/pathfinder-template-folder</span>
  <span style="left:1140px">LF</span>
  <span style="left:1172px">UTF-8</span>
  <span style="left:1227px">Markdown React (mdx)</span>
  <svg style="left:1376px;top:6px" width="10" height="16" viewBox="0 0 10 16"><path fill="#9da5b4" fill-rule="evenodd" d="M10 5c0-1.110-.89-2-2-2a1.993 1.993 0 0 0-1 3.720v.3c-.020.520-.230.980-.630 1.380-.4.400-.860.610-1.380.630-.83.020-1.480.160-2 .450V4.720a1.993 1.993 0 0 0-1-3.720C.88 1 0 1.890 0 3a2 2 0 0 0 1 1.720v6.560c-.590.350-1 .990-1 1.720 0 1.110.890 2 2 2 1.110 0 2-.890 2-2 0-.530-.2-1-.530-1.360.090-.060.480-.410.590-.470.250-.110.560-.170.940-.170 1.050-.050 1.950-.450 2.750-1.250S8.950 7.770 9 6.730h-.020C9.590 6.370 10 5.730 10 5zM2 1.800c.66 0 1.200.55 1.200 1.200 0 .65-.550 1.200-1.200 1.200C1.350 4.200.8 3.650.8 3c0-.65.550-1.200 1.200-1.200zm0 12.410c-.66 0-1.200-.550-1.200-1.200 0-.65.550-1.200 1.200-1.200.65 0 1.200.55 1.200 1.200 0 .65-.550 1.200-1.200 1.200zm6-8c-.66 0-1.200-.550-1.200-1.200 0-.65.550-1.200 1.200-1.200.65 0 1.200.55 1.200 1.200 0 .65-.550 1.200-1.200 1.200z"/></svg>
  <span style="left:1390px">master</span>
  <svg style="left:1447px;top:6px" width="12" height="16" viewBox="0 0 12 16"><path fill="#9da5b4" fill-rule="evenodd" d="M10.240 7.400a4.150 4.150 0 0 1-1.200 3.600 4.346 4.346 0 0 1-5.410.54L4.800 10.400.5 9.800l.6 4.200 1.310-1.260c2.360 1.740 5.700 1.570 7.840-.540a5.876 5.876 0 0 0 1.740-4.460l-1.750-.340zM2.960 5a4.346 4.346 0 0 1 5.410-.54L7.200 5.600l4.300.6-.6-4.200-1.310 1.260c-2.360-1.740-5.700-1.570-7.850.54C.5 5.030-.06 6.650.010 8.260l1.750.35A4.170 4.170 0 0 1 2.960 5z"/></svg>
  <span style="left:1463px">Fetch</span>
  <svg style="left:1513px;top:6px" width="16" height="16" viewBox="0 0 16 16"><path fill="#9da5b4" d="M8 0C3.580 0 0 3.580 0 8c0 3.540 2.290 6.530 5.470 7.590.4.070.55-.17.550-.380 0-.19-.010-.820-.010-1.490-2.010.370-2.530-.490-2.690-.940-.09-.230-.480-.940-.820-1.130-.280-.150-.680-.520-.010-.530.630-.010 1.080.580 1.230.820.720 1.210 1.870.870 2.330.660.070-.520.280-.870.510-1.070-1.780-.2-3.640-.890-3.640-3.950 0-.870.310-1.590.820-2.150-.080-.2-.360-1.020.080-2.120 0 0 .670-.210 2.200.820.640-.180 1.320-.270 2-.270.680 0 1.360.090 2 .270 1.530-1.040 2.200-.820 2.200-.820.440 1.100.160 1.920.080 2.120.510.560.820 1.270.820 2.150 0 3.070-1.870 3.750-3.650 3.950.290.250.540.730.540 1.480 0 1.070-.010 1.930-.010 2.200 0 .210.150.460.550.380A8.013 8.013 0 0 0 16 8c0-4.420-3.580-8-8-8z"/></svg>
  <span style="left:1533px">GitHub</span>
  <svg style="left:1590px;top:6.5px" width="13.5" height="15.4" viewBox="0 0 14 16"><path fill="#9da5b4" fill-rule="evenodd" d="M10.860 7c-.45-1.720-2-3-3.860-3-1.860 0-3.410 1.280-3.860 3H0v2h3.140c.45 1.720 2 3 3.860 3 1.860 0 3.410-1.280 3.860-3H14V7h-3.140zM7 10.200c-1.220 0-2.200-.980-2.200-2.200 0-1.220.980-2.200 2.200-2.200 1.220 0 2.200.98 2.200 2.200 0 1.220-.980 2.200-2.200 2.200z"/></svg>
  <span style="left:1608px">Git (13)</span>
 </div>
</div>

<div id="cm">
 <div class="list">
<div class="mi"><span class="ml" style="letter-spacing:0.085px">Search in Folder</span><span class="mk"></span></div>
<div class="mi"><span class="ml" style="letter-spacing:-0.031px">New File</span><span class="mk">A</span></div>
<div class="mi"><span class="ml" style="letter-spacing:0.101px">New Folder</span><span class="mk"><span class="sh">⇧</span>A</span></div>
<div class="sep"></div>
<div class="mi"><span class="ml" style="letter-spacing:-0.386px">Rename</span><span class="mk f2">F2</span></div>
<div class="mi"><span class="ml" style="letter-spacing:0.204px">Duplicate</span><span class="mk">D</span></div>
<div class="mi"><span class="ml" style="letter-spacing:0.054px">Delete</span><span class="mk bs">⌫</span></div>
<div class="mi hl"><span class="ml" style="letter-spacing:0.019px">Copy</span><span class="mk">⌘C</span></div>
<div class="mi"><span class="ml" style="letter-spacing:0.103px">Cut</span><span class="mk">⌘X</span></div>
<div class="mi"><span class="ml" style="letter-spacing:-0.266px">Paste</span><span class="mk">⌘V</span></div>
<div class="sep"></div>
<div class="mi"><span class="ml" style="letter-spacing:0.194px">Add Project Folder</span><span class="mk"><span class="sh">⇧</span>⌘O</span></div>
<div class="sep"></div>
<div class="mi"><span class="ml" style="letter-spacing:0.013px">Copy Full Path</span><span class="mk">^<span class="sh">⇧</span>C</span></div>
<div class="mi"><span class="ml" style="letter-spacing:0.135px">Copy Project Path</span><span class="mk"></span></div>
<div class="mi"><span class="ml" style="letter-spacing:0.155px">Open in New Window</span><span class="mk"></span></div>
<div class="mi"><span class="ml" style="letter-spacing:-0.046px">Reveal in Finder</span><span class="mk"></span></div>
<div class="sep"></div>
<div class="mi"><span class="ml" style="letter-spacing:0.077px">Split Up [⌘K <span class="ar">↑</span>]</span><span class="mk"></span></div>
<div class="mi"><span class="ml" style="letter-spacing:0.089px">Split Down [⌘K <span class="ar">↓</span>]</span><span class="mk"></span></div>
<div class="mi"><span class="ml" style="letter-spacing:0.148px">Split Left [⌘K <span class="ar">←</span>]</span><span class="mk"></span></div>
<div class="mi"><span class="ml" style="letter-spacing:0.105px">Split Right [⌘K <span class="ar">→</span>]</span><span class="mk"></span></div>
 </div>
 <div class="arr"></div>
 <div class="in"></div>
</div>
</body>
</html>
